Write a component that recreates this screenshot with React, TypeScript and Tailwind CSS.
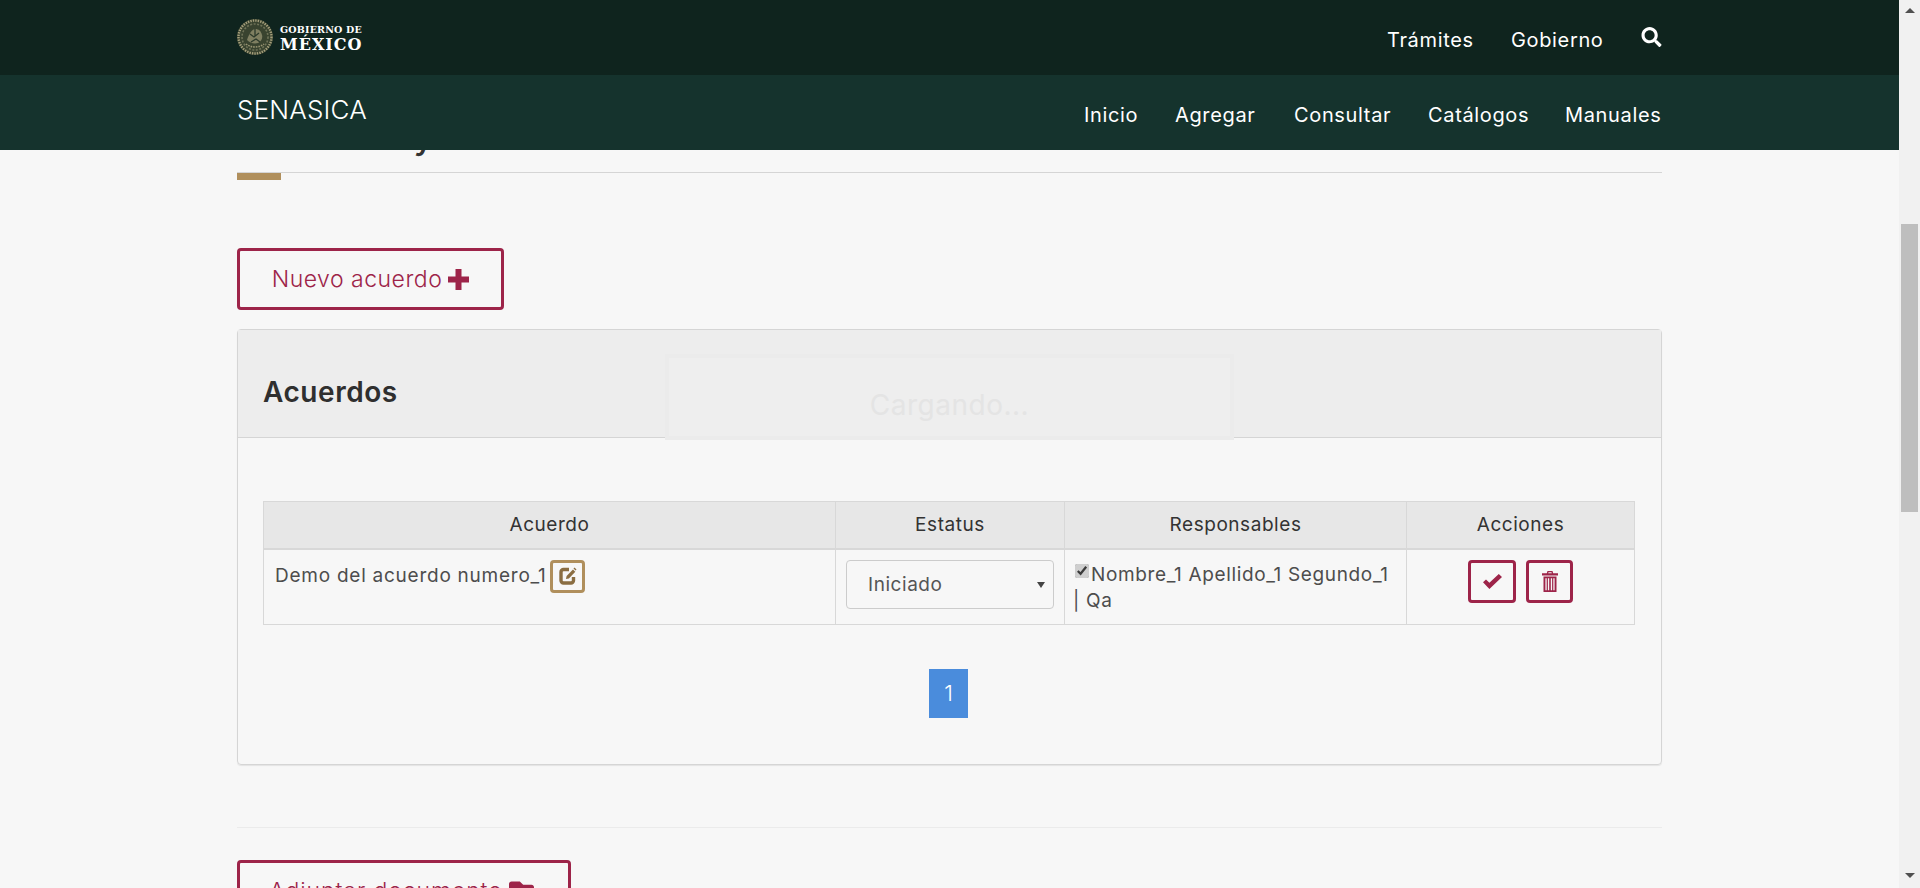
import { FaFolderOpen, FaSearch } from "react-icons/fa";

// ── Helpers ─────────────────────────────────────────────────────────────

const TOP_LINKS = [
  { label: "Trámites", width: "w-[87px]" },
  { label: "Gobierno", width: "w-[93px]" },
];

const SUB_LINKS = [
  { label: "Inicio", width: "w-[54px]" },
  { label: "Agregar", width: "w-[82px]" },
  { label: "Consultar", width: "w-[97px]" },
  { label: "Catálogos", width: "w-[100px]" },
  { label: "Manuales", width: "w-[97px]" },
];

function Seal() {
  return (
    <svg className="h-9 w-9 shrink-0" viewBox="0 0 36 36" aria-hidden="true">
      <circle cx="18" cy="18" r="18" fill="#39432f" />
      <circle cx="18" cy="18" r="16.5" fill="none" stroke="#a59f7c" strokeWidth="2.4" strokeDasharray="1.4 1.1" />
      <circle cx="18" cy="18" r="13" fill="none" stroke="#6f7358" strokeWidth="1.6" strokeDasharray="2 1.5" />
      <path d="M10 21c2-6 5-11 8-11 4 0 6 2 7 6 1 3-1 7-4 8-4 1-8 0-11-3z" fill="#7f7f61" />
      <path d="M13 15l4 3 5-4M14 23l5-3 4 3M18 10v7" fill="none" stroke="#2c3a2b" strokeWidth="1.3" />
      <path d="M9 25c5 4 13 4 18 0" fill="none" stroke="#9a9673" strokeWidth="1.6" strokeDasharray="1.6 1" />
    </svg>
  );
}

function PlusIcon() {
  return (
    <svg className="h-[21px] w-[21px] shrink-0" viewBox="0 0 21 21" fill="currentColor" aria-hidden="true">
      <path d="M7.500 0h6v7.500H21v6h-7.500V21h-6v-7.500H0v-6h7.500z" />
    </svg>
  );
}

function EditIcon() {
  return (
    <svg className="h-[20px] w-[20px]" viewBox="0 0 20 20" fill="none" aria-hidden="true">
      <path d="M11 3.500H5.500A2.500 2.500 0 0 0 3 6v8.500A2.500 2.500 0 0 0 5.500 17H13a2.500 2.500 0 0 0 2.500-2.500V11" stroke="#8a6d42" strokeWidth="3.400" />
      <path d="M8 13l.6-3L15 3.500l2.300 2.300L10.900 12.400z" fill="#8a6d42" />
      <path d="M16.500 1.500l2 2-1 1-2-2z" fill="#8a6d42" />
    </svg>
  );
}

function CheckIcon() {
  return (
    <svg className="h-[15px] w-[19px]" viewBox="0 0 19 15" fill="currentColor" aria-hidden="true">
      <path d="M0 8.200L3 5.500l3.400 3.300L15.800 0 19 3 6.400 15z" />
    </svg>
  );
}

function TrashIcon() {
  return (
    <svg className="h-[21px] w-[16px]" viewBox="0 0 16 21" fill="currentColor" aria-hidden="true">
      <path d="M5.500 0h5l.7 2.200H16v2.200H0V2.200h4.800zM6.500 1.200l-.3 1h3.600l-.3-1z" fillRule="evenodd" />
      <path fillRule="evenodd" d="M1.500 5.500h13V21h-13zM3.400 7.300v11.900h1.300V7.300zM5.900 7.300v11.900h1.300V7.300zM8.800 7.300v11.900h1.300V7.300zM11.300 7.300v11.900h1.300V7.300z" />
    </svg>
  );
}

function Scrollbar() {
  return (
    <aside className="flex h-[888px] w-[21px] shrink-0 flex-col items-center bg-[#f1f1f1]">
      <span className="mt-[8px] h-0 w-0 border-x-[5px] border-b-[5px] border-x-transparent border-b-[#505050]" />
      <span className="mt-[211px] h-[288px] w-[17px] bg-[#bebebe]" />
      <span className="mt-[361px] h-0 w-0 border-x-[5px] border-t-[5px] border-x-transparent border-t-[#505050]" />
    </aside>
  );
}

// ── Component ───────────────────────────────────────────────────────────

export default function App() {
  return (
    <div className="flex h-[888px] overflow-hidden bg-[#f7f7f7] text-[#4d4d4d] [font-family:Inter,'Noto_Sans',sans-serif]">
      <div className="relative flex min-w-0 flex-1 flex-col">
        {/* top bar */}
        <header className="h-[75px] shrink-0 bg-[#0f241e] text-white">
          <div className="mx-auto flex h-full w-[1425px] items-center justify-between">
            <div className="flex items-center gap-[7px] pb-[1px]">
              <Seal />
              <div className="flex flex-col pt-[3px] [font-family:'DejaVu_Serif',serif] font-bold">
                <span className="text-[9.500px] leading-[12px] tracking-[0.2px]">GOBIERNO DE</span>
                <span className="text-[16px] leading-[18px] tracking-[1px]">MÉXICO</span>
              </div>
            </div>
            <nav className="flex items-center gap-[37px] pt-[4px] text-[20px] tracking-[0.65px]">
              {TOP_LINKS.map((link) => (
                <a key={link.label} className={`${link.width} whitespace-nowrap`}>
                  {link.label}
                </a>
              ))}
              <FaSearch className="mb-[6px] h-[20px] w-[21px]" />
            </nav>
          </div>
        </header>

        {/* sub bar */}
        <div className="h-[75px] shrink-0 bg-[#15332d] text-white">
          <div className="mx-auto flex h-full w-[1425px] items-center justify-between">
            <span className="pb-[6px] text-[26px] font-light tracking-[0.2px]">SENASICA</span>
            <nav className="flex items-center gap-[37px] pt-[5px] text-[20px] tracking-[0.65px]">
              {SUB_LINKS.map((link) => (
                <a key={link.label} className={`${link.width} whitespace-nowrap`}>
                  {link.label}
                </a>
              ))}
            </nav>
          </div>
        </div>

        {/* scrolled content */}
        <main className="min-h-0 flex-1 overflow-hidden">
          <div className="mx-auto w-[1425px]">
            <div className="-mt-[34px] h-[57px] border-b border-[#d5d5d5]">
              <h2 className="text-[35px] font-medium leading-[40px] tracking-[0.7px] text-[#333]">Acuerdos y documentos</h2>
            </div>
            <div className="h-[7px] w-[44px] bg-[#b08f5c]" />

            <button className="mt-[68px] flex h-[62px] w-[267px] items-center justify-center gap-[6px] rounded-[4px] border-[3px] border-[#9d2449] text-[23px] font-light tracking-[0.5px] text-[#9d2449]">
              Nuevo acuerdo
              <PlusIcon />
            </button>

            {/* panel */}
            <section className="relative mt-[19px] h-[436px] rounded-[4px] border border-[#d5d5d5] shadow-[0_1px_1px_rgba(0,0,0,0.08)]">
              <div className="flex h-[108px] items-center border-b border-[#d5d5d5] bg-[#ededed] pl-[25px] pt-[17px]">
                <h3 className="text-[28px] font-semibold tracking-[0.55px] text-[#2f2f2f]">Acuerdos</h3>
              </div>

              <div className="absolute left-[427px] top-[24px] flex h-[86px] w-[569px] items-center justify-center border-4 border-[#ebebeb] bg-[#eeeeee] pt-[15px] text-[28px] tracking-[0.5px] text-[#e4e4e4]">
                Cargando...
              </div>

              <div className="px-[25px] pt-[63px]">
                <table className="w-[1371px] table-fixed border-collapse border border-[#d8d8d8] text-[19px] tracking-[0.55px]">
                  <colgroup>
                    <col className="w-[572px]" />
                    <col className="w-[229px]" />
                    <col className="w-[342px]" />
                    <col className="w-[228px]" />
                  </colgroup>
                  <thead>
                    <tr className="h-[47px] bg-[#e7e7e7] text-[#333]">
                      <th className="border border-b-2 border-[#d8d8d8] font-normal">Acuerdo</th>
                      <th className="border border-b-2 border-[#d8d8d8] font-normal">Estatus</th>
                      <th className="border border-b-2 border-[#d8d8d8] font-normal">Responsables</th>
                      <th className="border border-b-2 border-[#d8d8d8] font-normal">Acciones</th>
                    </tr>
                  </thead>
                  <tbody>
                    <tr className="h-[76px]">
                      <td className="border border-[#d8d8d8] pl-[11px] pt-[10px] align-top">
                        <div className="flex items-start gap-[4px]">
                          <span className="whitespace-nowrap pt-[3px] leading-[26px] tracking-[0.75px]">Demo del acuerdo numero_1</span>
                          <span className="flex h-[33px] w-[35px] items-center justify-center rounded-[4px] border-[3px] border-[#b08f5c]">
                            <EditIcon />
                          </span>
                        </div>
                      </td>
                      <td className="border border-[#d8d8d8] pl-[10px] pt-[10px] align-top">
                        <div className="relative w-[208px]">
                          <select
                            defaultValue="Iniciado"
                            className="h-[49px] w-full appearance-none rounded-[4px] border border-[#ccc] bg-[#f7f7f7] pl-[21px] pr-[6px] pt-[2px] text-[#555]"
                          >
                            <option>Iniciado</option>
                          </select>
                          <span className="absolute right-[9px] top-[22px] h-0 w-0 border-x-[4px] border-t-[6px] border-x-transparent border-t-[#444]" />
                        </div>
                      </td>
                      <td className="border border-[#d8d8d8] pl-[8px] pt-[12px] align-top leading-[26px] tracking-[0.65px]">
                        <input type="checkbox" checked readOnly className="ml-[2px] mr-[2px] h-[14px] w-[14px] align-[3px] accent-[#cfcfcf]" />
                        Nombre_1 Apellido_1 Segundo_1
                        <br />| Qa
                      </td>
                      <td className="border border-[#d8d8d8] pt-[10px] align-top">
                        <div className="flex justify-center gap-[10px] text-[#9d2449]">
                          <span className="flex h-[43px] w-[48px] items-center justify-center rounded-[4px] border-[3px] border-[#9d2449]">
                            <CheckIcon />
                          </span>
                          <span className="flex h-[43px] w-[47px] items-center justify-center rounded-[4px] border-[3px] border-[#9d2449]">
                            <TrashIcon />
                          </span>
                        </div>
                      </td>
                    </tr>
                  </tbody>
                </table>

                <div className="mt-[44px] flex justify-center pr-[2px]">
                  <span className="flex h-[49px] w-[39px] items-center justify-center bg-[#4a8cdc] text-[22px] font-light text-white">
                    1
                  </span>
                </div>
              </div>
            </section>

            <hr className="mt-[62px] border-[#ebebeb]" />

            <button className="mt-[32px] flex h-[62px] w-[334px] items-center justify-center gap-[6px] rounded-[4px] border-[3px] border-[#9d2449] text-[23px] font-light tracking-[0.9px] text-[#9d2449]">
              Adjuntar documento
              <FaFolderOpen className="h-[27px] w-[30px]" />
            </button>
          </div>
        </main>
      </div>
      <Scrollbar />
    </div>
  );
}
